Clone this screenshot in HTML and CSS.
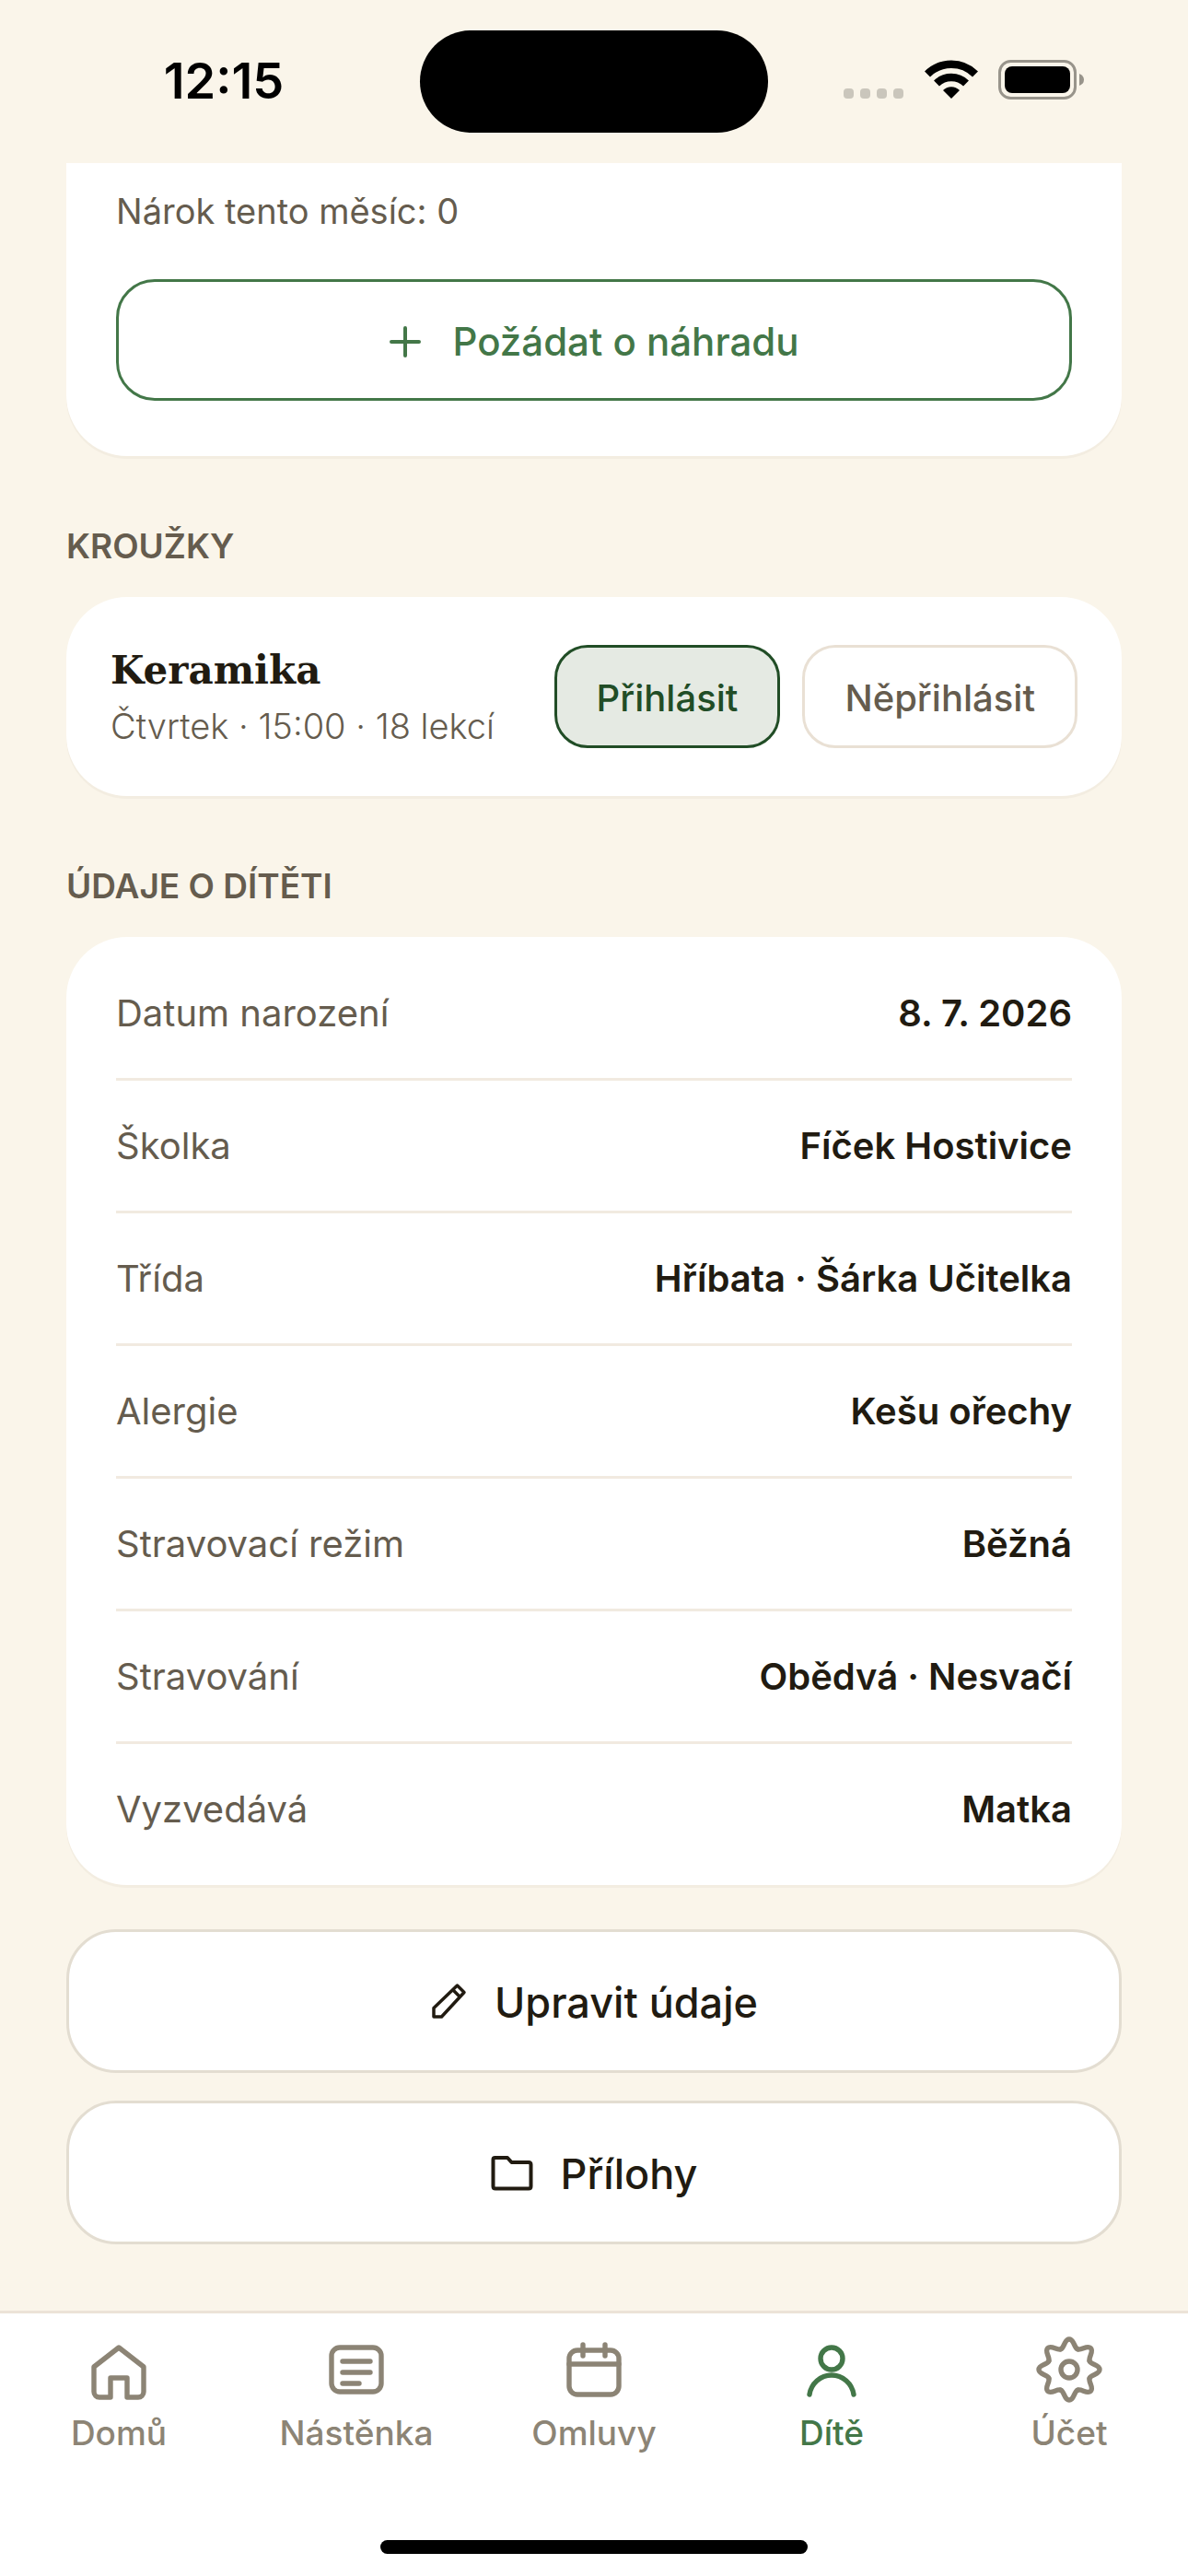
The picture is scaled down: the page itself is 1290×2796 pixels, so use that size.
FILE: index.html
```html
<!DOCTYPE html>
<html lang="cs">
<head>
    <meta charset="UTF-8">
    <meta name="viewport" content="width=device-width, initial-scale=1.0">
    <title>Dítě</title>
    <link rel="stylesheet" href="styles.css">
</head>
<body>
    <header class="status-bar">
        <span class="time">12:15</span>
        <div class="island"></div>
        <div class="status-icons">
            <svg width="66" height="42" viewBox="0 0 66 42" fill="#cac6bc">
                <rect x="0" y="31" width="11" height="11" rx="4"/>
                <rect x="18" y="31" width="11" height="11" rx="4"/>
                <rect x="36" y="31" width="11" height="11" rx="4"/>
                <rect x="54" y="31" width="11" height="11" rx="4"/>
            </svg>
            <svg width="58" height="42" viewBox="0 0 58 42" fill="none" stroke="#000" stroke-width="8.5">
                <path d="M3 15.5a37 37 0 0 1 52 0"/>
                <path d="M13 25.5a23 23 0 0 1 32 0"/>
                <path d="M29 42l-9-9a12.5 12.5 0 0 1 18 0z" fill="#000" stroke="none"/>
            </svg>
            <svg width="94" height="44" viewBox="0 0 94 44">
                <rect x="1.5" y="1.5" width="82" height="40" rx="12" fill="none" stroke="#98948b" stroke-width="3"/>
                <rect x="7" y="7" width="71" height="29" rx="8"/>
                <path d="M88 15q5 2 5 6.500t-5 6.500z" fill="#98948b"/>
            </svg>
        </div>
    </header>

    <main class="content">
        <section class="card card-top">
            <p class="claim">Nárok tento měsíc: 0</p>
            <button class="btn-outline" type="button">
                <svg width="36" height="36" viewBox="0 0 36 36" fill="none" stroke="currentColor" stroke-width="4" stroke-linecap="round">
                    <path d="M18 3v30M3 18h30"/>
                </svg>
                Požádat o náhradu
            </button>
        </section>

        <h2>KROUŽKY</h2>
        <section class="card club">
            <div class="club-info">
                <h3>Keramika</h3>
                <p>Čtvrtek · 15:00 · 18 lekcí</p>
            </div>
            <div class="club-actions">
                <button class="chip chip-active" type="button">Přihlásit</button>
                <button class="chip" type="button">Něpřihlásit</button>
            </div>
        </section>

        <h2>ÚDAJE O DÍTĚTI</h2>
        <section class="card">
            <table class="details">
                <tr><th scope="row">Datum narození</th><td>8. 7. 2026</td></tr>
                <tr><th scope="row">Školka</th><td>Fíček Hostivice</td></tr>
                <tr><th scope="row">Třída</th><td>Hříbata · Šárka Učitelka</td></tr>
                <tr><th scope="row">Alergie</th><td>Kešu ořechy</td></tr>
                <tr><th scope="row">Stravovací režim</th><td>Běžná</td></tr>
                <tr><th scope="row">Stravování</th><td>Obědvá · Nesvačí</td></tr>
                <tr><th scope="row">Vyzvedává</th><td>Matka</td></tr>
            </table>
        </section>

        <div class="actions">
            <button class="btn-large" type="button">
                <svg width="40" height="44" viewBox="0 0 40 44" fill="none" stroke="currentColor" stroke-width="3.5" stroke-linejoin="round">
                    <path d="M4 37v-9.500L29.500 3l7.500 7.500L12.500 37zM25 8l7.500 7.500"/>
                </svg>
                Upravit údaje
            </button>
            <button class="btn-large" type="button">
                <svg width="46" height="44" viewBox="0 0 46 44" fill="none" stroke="currentColor" stroke-width="4" stroke-linejoin="round">
                    <path d="M2.500 6q0-2 2-2H18l4.500 5H41q2.500 0 2.500 2.500V35q0 2.500-2.500 2.500H5Q2.500 37.500 2.500 35z"/>
                </svg>
                Přílohy
            </button>
        </div>
    </main>

    <nav class="tab-bar">
        <a href="#domu">
            <svg class="tab-icon" viewBox="0 0 24 24">
                <path d="M3 10l9-7 9 7v9a2 2 0 0 1-2 2h-4v-7H9v7H5a2 2 0 0 1-2-2z"/>
            </svg>
            Domů
        </a>
        <a href="#nastenka">
            <svg class="tab-icon" viewBox="0 0 24 24">
                <rect x="3" y="3" width="18" height="16" rx="3"/>
                <path d="M7 8h10M7 12h10M7 16h6"/>
            </svg>
            Nástěnka
        </a>
        <a href="#omluvy">
            <svg class="tab-icon" viewBox="0 0 24 24">
                <rect x="3" y="4" width="18" height="16" rx="3"/>
                <path d="M3 9h18M8 2v4M16 2v4"/>
            </svg>
            Omluvy
        </a>
        <a href="#dite" class="active">
            <svg class="tab-icon" viewBox="0 0 24 24">
                <circle cx="12" cy="7" r="4"/>
                <path d="M4 20c.6-4 4-7 8-7s7.400 3 8 7"/>
            </svg>
            Dítě
        </a>
        <a href="#ucet">
            <svg class="tab-icon" viewBox="-12 -11 24 24">
                <circle r="3"/>
                <path id="tooth" d="M-3.060-7.390C-1.670-7.960-1.800-11 0-11S1.670-7.960 3.060-7.390"/>
                <use href="#tooth" transform="rotate(45)"/>
                <use href="#tooth" transform="rotate(90)"/>
                <use href="#tooth" transform="rotate(135)"/>
                <use href="#tooth" transform="rotate(180)"/>
                <use href="#tooth" transform="rotate(225)"/>
                <use href="#tooth" transform="rotate(270)"/>
                <use href="#tooth" transform="rotate(315)"/>
            </svg>
            Účet
        </a>
    </nav>
    <div class="home-area"><div class="home-indicator"></div></div>
</body>
</html>
```
FILE: styles.css
```css
* {
    box-sizing: border-box;
}
body {
    margin: 0;
    min-height: 100vh;
    display: flex;
    flex-direction: column;
    background-color: #faf5ea;
    color: #211b11;
    font-family: Inter, "Noto Sans", sans-serif;
}
h2, h3, p {
    margin: 0;
}
button {
    font-family: inherit;
    cursor: pointer;
}
.status-bar {
    height: 177px;
    padding-top: 33px;
    display: grid;
    grid-template-columns: 1fr 378px 1fr;
    align-items: start;
}
.time {
    padding-top: 25px;
    padding-left: 30px;
    text-align: center;
    color: #000;
    font-size: 54px;
    line-height: 60px;
    font-weight: 600;
}
.island {
    height: 111px;
    border-radius: 56px;
    background-color: #000;
}
.status-icons {
    display: flex;
    align-items: flex-start;
    gap: 22px;
    padding-top: 32px;
    padding-left: 82px;
}
.content {
    padding: 0 72px;
}
.card {
    background-color: #fff;
    border-radius: 66px;
    box-shadow: 0 3px 0 #f3ede1;
    padding: 12px 54px;
}
.card-top {
    border-radius: 0 0 66px 66px;
    padding: 28px 54px 60px;
}
.claim {
    color: #655c4e;
    font-size: 38px;
    line-height: 48px;
    margin-bottom: 50px;
}
.btn-outline {
    width: 100%;
    height: 132px;
    padding-top: 4px;
    display: flex;
    align-items: center;
    justify-content: center;
    gap: 33px;
    background: none;
    border: 3px solid #437748;
    border-radius: 42px;
    color: #437748;
    font-size: 42px;
    font-weight: 500;
}
h2 {
    margin: 72px 0 30px;
    color: #655c4e;
    font-size: 37px;
    line-height: 51px;
    font-weight: 600;
}
.club {
    display: flex;
    align-items: center;
    justify-content: space-between;
    padding: 46px 48px;
}
.club-info {
    padding-top: 4px;
}
.club-info h3 {
    font-family: "DejaVu Serif", serif;
    font-size: 42px;
    line-height: 60px;
}
.club-info p {
    color: #655c4e;
    font-size: 38px;
    line-height: 60px;
    font-weight: 300;
}
.club-actions {
    display: flex;
    gap: 24px;
}
.chip {
    height: 112px;
    padding: 3px 43px 0;
    background-color: #fff;
    border: 3px solid #e9e0d4;
    border-radius: 36px;
    color: #655c4e;
    font-size: 40px;
    font-weight: 500;
}
.chip-active {
    background-color: #e5eae3;
    border-color: #214d26;
    color: #214d26;
}
.details {
    width: 100%;
    border-spacing: 0;
}
.details th, .details td {
    height: 144px;
    padding: 0;
    border-bottom: 3px solid #f1eae0;
    font-size: 40px;
    line-height: 54px;
}
.details tr:last-child > * {
    height: 141px;
    border-bottom: none;
}
.details th {
    text-align: left;
    font-weight: 400;
    color: #655c4e;
}
.details td {
    text-align: right;
    font-weight: 600;
}
.actions {
    display: flex;
    flex-direction: column;
    gap: 30px;
    margin-top: 48px;
}
.btn-large {
    height: 156px;
    padding-top: 4px;
    display: flex;
    align-items: center;
    justify-content: center;
    gap: 30px;
    background-color: #fff;
    border: 3px solid #e3ddd1;
    border-radius: 54px;
    color: #211b11;
    font-size: 45px;
    font-weight: 500;
}
.tab-bar {
    margin-top: auto;
    display: grid;
    grid-template-columns: repeat(5, 1fr);
    padding-top: 28px;
    background-color: #fff;
    border-top: 3px solid #ece3d8;
}
.tab-bar a {
    display: flex;
    flex-direction: column;
    align-items: center;
    gap: 6px;
    color: #8c8475;
    font-size: 37px;
    line-height: 48px;
    font-weight: 500;
    text-decoration: none;
}
.tab-bar .active {
    color: #437748;
}
.tab-icon {
    width: 72px;
    height: 72px;
    overflow: visible;
    fill: none;
    stroke: currentColor;
    stroke-width: 1.8;
    stroke-linecap: round;
    stroke-linejoin: round;
}
.home-area {
    height: 131px;
    padding-top: 92px;
    background-color: #fff;
}
.home-indicator {
    width: 36%;
    height: 15px;
    margin: 0 auto;
    border-radius: 8px;
    background-color: #000;
}
```
